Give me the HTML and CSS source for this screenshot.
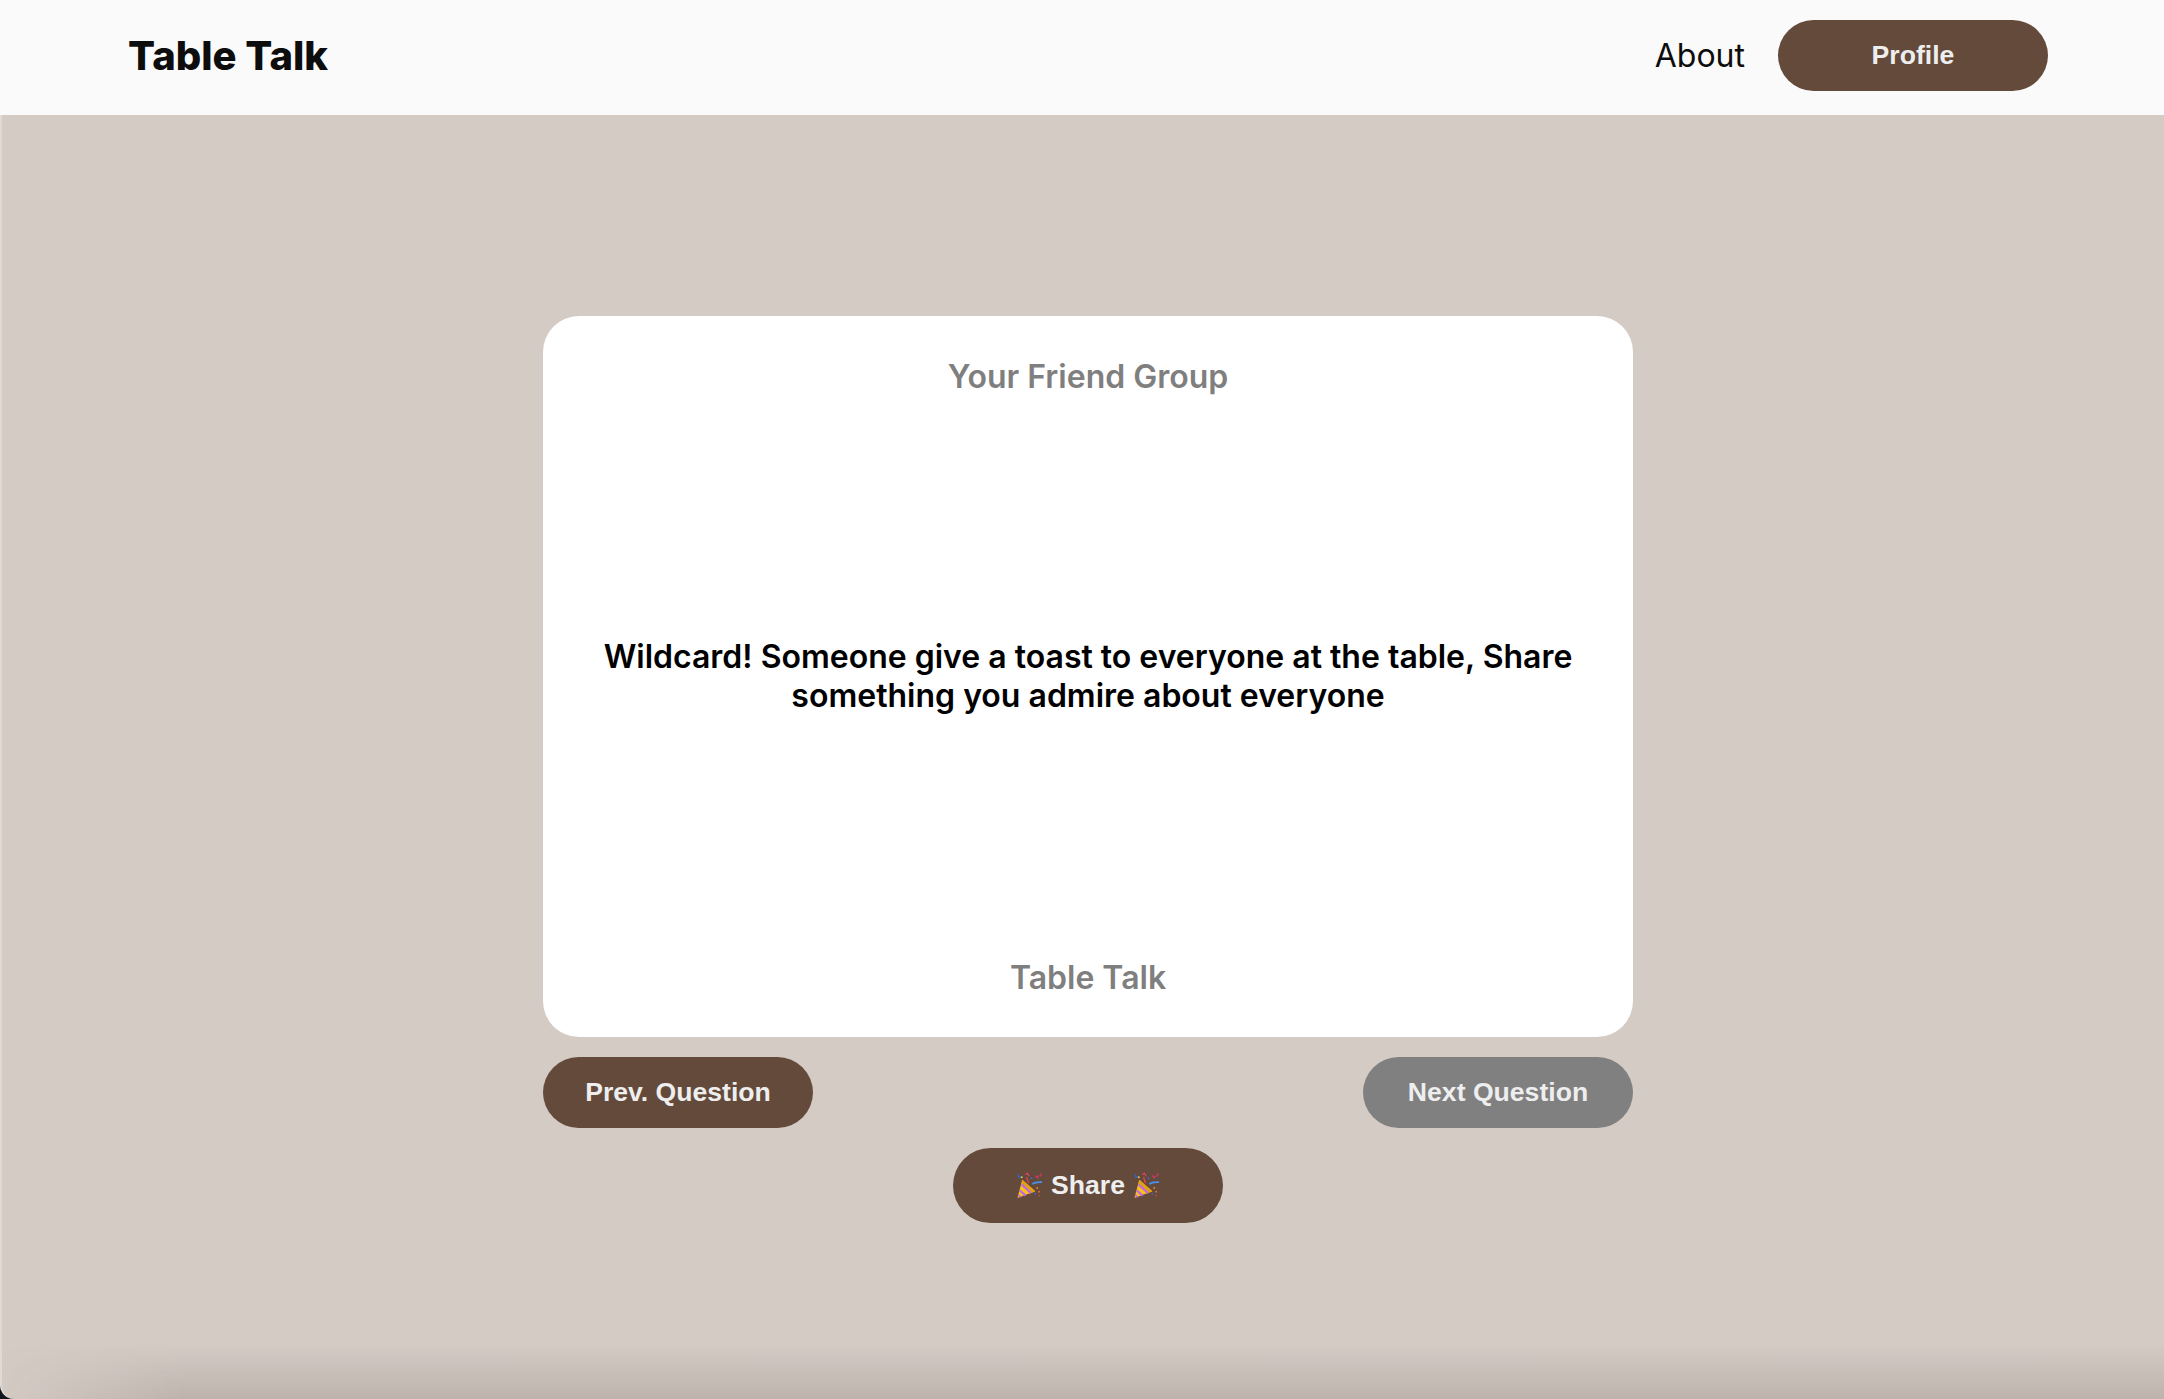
FILE: index.html
```html
<!DOCTYPE html>
<html lang="en">
<head>
    <meta charset="UTF-8">
    <meta name="viewport" content="width=device-width, initial-scale=1.0">
    <title>Table Talk</title>
    <link rel="stylesheet" href="styles.css">
</head>
<body>

    <svg class="sprites" width="0" height="0">
        <symbol id="popper" viewBox="0 0 28 28">
            <path d="M1.5 26.5 L6.5 7.5 L20 19.5 Z" fill="#f6c020"/>
            <path d="M6.5 7.5 L20 19.5 L14 22 L5.5 12.5 Z" fill="#e2a114"/>
            <path d="M5.8 12.5 L15.6 21.2" stroke="#c264e6" stroke-width="2.2" fill="none"/>
            <path d="M4 18.6 L10 24" stroke="#c264e6" stroke-width="2.2" fill="none"/>
            <path d="M2.4 23.4 L5 25.6" stroke="#c264e6" stroke-width="1.8" fill="none"/>
            <path d="M11 5 L13 11" stroke="#ee4058" stroke-width="1.4" fill="none"/>
            <path d="M17 12 Q20 9.5 27 10" stroke="#4a90f0" stroke-width="1.8" fill="none"/>
            <path d="M2 1.5 L3 5 L5.5 4" stroke="#2f66d0" stroke-width="1.3" fill="none"/>
            <path d="M9.5 2 L12 0.8 L13.5 4" stroke="#e8436e" stroke-width="1.2" fill="none"/>
            <path d="M20 3 L22 5.5 L24 3" stroke="#d43a6c" stroke-width="1.2" fill="none"/>
            <path d="M26 1 L25.5 4" stroke="#d43a6c" stroke-width="1.2" fill="none"/>
            <circle cx="6" cy="5" r="1" fill="#f0c820"/>
            <circle cx="16" cy="6" r="1" fill="#3a6bd8"/>
            <circle cx="22" cy="16" r="1" fill="#e8882a"/>
            <circle cx="24" cy="20" r="1" fill="#e86c2a"/>
            <circle cx="20" cy="22" r="0.9" fill="#3a6bd8"/>
            <circle cx="24" cy="24" r="0.8" fill="#d84a3a"/>
        </symbol>
    </svg>

    <nav class="navbar">
        <a class="brand" href="#">Table Talk</a>
        <div class="nav-links">
            <a class="nav-link" href="#">About</a>
            <button class="btn">Profile</button>
        </div>
    </nav>

    <main class="content">
        <section class="card">
            <p class="card-label">Your Friend Group</p>
            <p class="card-question">Wildcard! Someone give a toast to everyone at the table, Share something you admire about everyone</p>
            <p class="card-label">Table Talk</p>
        </section>

        <div class="card-controls">
            <button class="btn">Prev. Question</button>
            <button class="btn btn-grey">Next Question</button>
        </div>

        <button class="btn btn-share">
            <svg class="popper" role="img" aria-label="party popper"><use href="#popper"/></svg>
            Share
            <svg class="popper" role="img" aria-label="party popper"><use href="#popper"/></svg>
        </button>

        <div class="window-shade"></div>
    </main>

</body>
</html>
```

FILE: styles.css
```css
* {
    margin: 0;
    padding: 0;
    box-sizing: border-box;
}

html, body {
    height: 100%;
}

body {
    display: flex;
    flex-direction: column;
    overflow: hidden;
    background-color: #10161c;
    font-family: "Inter", "Liberation Sans", sans-serif;
    color: #0d0d0d;
}

.sprites {
    position: absolute;
}

.navbar {
    flex: none;
    display: flex;
    justify-content: space-between;
    align-items: center;
    height: 115px;
    padding: 0 116px 5px 128px;
    background-color: #fafafa;
}

.brand {
    font-size: 40px;
    font-weight: 800;
    color: #0d0d0d;
    text-decoration: none;
}

.nav-links {
    display: flex;
    align-items: center;
    gap: 33px;
}

.nav-link {
    font-size: 32px;
    color: #0d0d0d;
    text-decoration: none;
}

.btn {
    width: 270px;
    height: 71px;
    border: none;
    border-radius: 36px;
    background-color: #634a3b;
    color: #eeeeee;
    font-family: "Liberation Sans", Arial, sans-serif;
    font-size: 26.6px;
    font-weight: 700;
}

.btn-grey {
    background-color: #808080;
}

.btn-share {
    display: flex;
    justify-content: center;
    align-items: center;
    gap: 8px;
    height: 75px;
    margin-top: 20px;
    border-radius: 38px;
}

.popper {
    width: 27px;
    height: 28px;
}

.content {
    position: relative;
    flex: 1;
    display: flex;
    flex-direction: column;
    align-items: center;
    padding: 201px 0 0 10px;
    overflow: hidden;
    border-left: 2px solid #e0d9d4;
    border-bottom-left-radius: 14px;
    background-color: #d5cbc5;
}

.card {
    display: flex;
    flex-direction: column;
    justify-content: space-between;
    align-items: center;
    width: 1090px;
    height: 721px;
    padding: 41px 40px 40px;
    border-radius: 36px;
    background-color: #ffffff;
    text-align: center;
}

.card-label {
    font-size: 32px;
    font-weight: 600;
    color: #7f7f7f;
}

.card-question {
    margin-bottom: 3px;
    font-size: 32px;
    font-weight: 600;
    line-height: 39px;
    color: #000000;
}

.card-controls {
    display: flex;
    justify-content: space-between;
    width: 1090px;
    margin-top: 20px;
}

/* shadow along the bottom edge of the window, fades out to the left */
.window-shade {
    position: absolute;
    left: 0;
    right: 0;
    bottom: 0;
    height: 55px;
    background: linear-gradient(to bottom, rgba(90, 80, 72, 0), rgba(90, 80, 72, 0.19));
    -webkit-mask-image: linear-gradient(to right, rgba(0, 0, 0, 0.05), #000 180px);
    mask-image: linear-gradient(to right, rgba(0, 0, 0, 0.05), #000 180px);
}
```
